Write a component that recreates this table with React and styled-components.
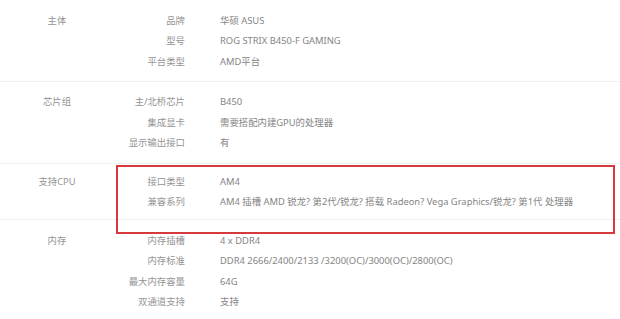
import styled, { createGlobalStyle } from 'styled-components'

const GlobalStyle = createGlobalStyle`
	html, body {
		margin: 0;
		padding: 0;
		background: #fff;
	}
	body {
		font-family: "Noto Sans", "Noto Sans CJK SC", sans-serif;
		-webkit-font-smoothing: antialiased;
	}
`

const specs = [
	{
		title: '主体',
		pad: '10.5px 0 9px',
		rows: [
			['品牌', '华硕 ASUS'],
			['型号', 'ROG STRIX B450-F GAMING'],
			['平台类型', 'AMD平台'],
		],
	},
	{
		title: '芯片组',
		pad: '10px 0 9px',
		rows: [
			['主/北桥芯片', 'B450'],
			['集成显卡', '需要搭配内建GPU的处理器'],
			['显示输出接口', '有'],
		],
	},
	{
		title: '支持CPU',
		pad: '8px 0 6px',
		marked: true,
		rows: [
			['接口类型', 'AM4'],
			['兼容系列', 'AM4 插槽 AMD 锐龙? 第2代/锐龙? 搭载 Radeon? Vega Graphics/锐龙? 第1代 处理器'],
		],
	},
	{
		title: '内存',
		pad: '11px 0 9px',
		rows: [
			['内存插槽', '4 x DDR4'],
			['内存标准', 'DDR4 2666/2400/2133 /3200(OC)/3000(OC)/2800(OC)'],
			['最大内存容量', '64G'],
			['双通道支持', '支持'],
		],
	},
]

function App() {
	return (
		<>
			<GlobalStyle />
			<SpecTable>
				{specs.map((group) => (
					<Section key={group.title} $pad={group.pad}>
						<Category>{group.title}</Category>
						<Rows>
							{group.rows.map(([label, value]) => (
								<Row key={label}>
									<Label>{label}</Label>
									<Value>{value}</Value>
								</Row>
							))}
						</Rows>
						{group.marked && <Marker />}
					</Section>
				))}
			</SpecTable>
		</>
	)
}

const SpecTable = styled.div`
	width: 620px;
	height: 319px;
	overflow: hidden;
	display: flex;
	flex-direction: column;
`

const Section = styled.div`
	position: relative;
	display: flex;
	padding: ${({ $pad }) => $pad};
	border-bottom: 1px solid #f0f0f0;
	flex-shrink: 0;
`

const Category = styled.div`
	width: 114px;
	text-align: center;
	font-size: 9.4px;
	line-height: 20.5px;
	color: #949494;
`

const Rows = styled.div`
	display: flex;
	flex-direction: column;
	flex: 1;
`

const Row = styled.div`
	display: flex;
	font-size: 9.4px;
	line-height: 20.5px;
	white-space: nowrap;
`

const Label = styled.div`
	width: 71px;
	text-align: right;
	color: #949494;
`

const Value = styled.div`
	padding-left: 35px;
	color: #858585;
`

// red annotation frame drawn over the CPU block
const Marker = styled.div`
	position: absolute;
	top: 1px;
	left: 116px;
	right: 5px;
	height: 69px;
	box-sizing: border-box;
	border: 2.5px solid #d63a3c;
	pointer-events: none;
`

export default App
